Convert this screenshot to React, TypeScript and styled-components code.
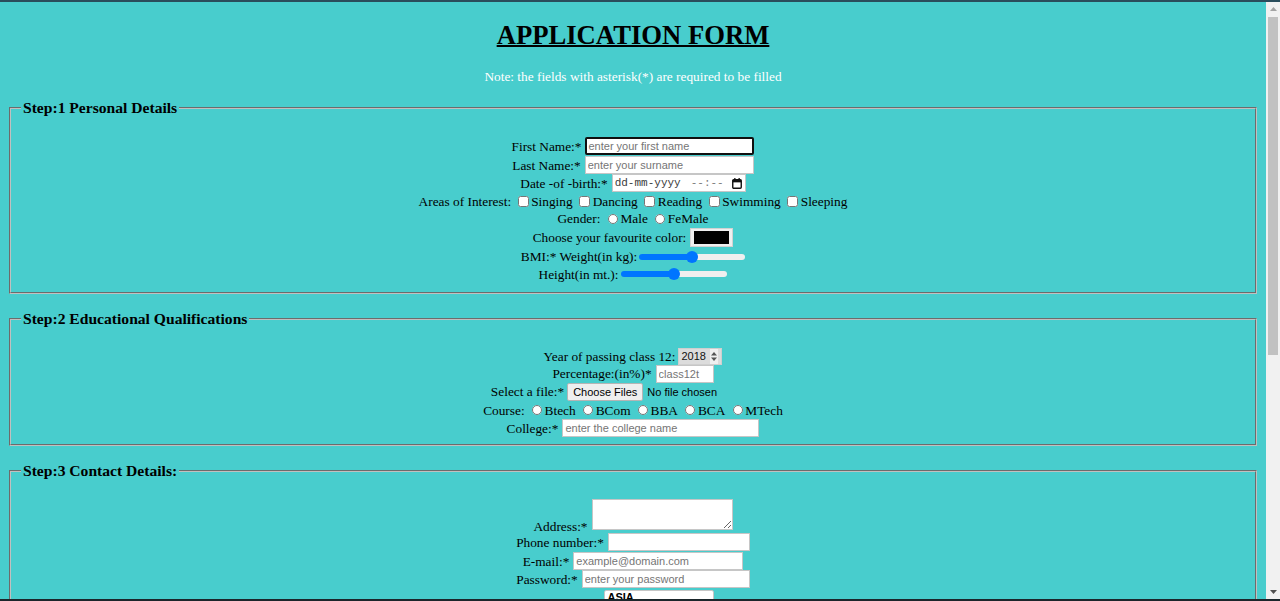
import React from "react";
import styled, { createGlobalStyle, css } from "styled-components";

const GlobalStyle = createGlobalStyle`
  html, body { margin: 0; padding: 0; height: 100%; overflow: hidden; }
  body { background: #48cdcd; font-family: "Liberation Serif", "Times New Roman", serif; }
  #root { height: 100%; }
`;

const Frame = styled.div`
  height: 601px;
  box-sizing: border-box;
  display: flex;
  flex-direction: column;
  border-top: 2px solid #2a4d5c;
  border-bottom: 2px solid #1b262b;
`;

const Viewport = styled.div`
  flex: 1;
  min-height: 0;
  display: flex;
`;

const Page = styled.main`
  flex: 1;
  min-width: 0;
  overflow: hidden;
  padding: 0 7px;
  background: #48cdcd;
  color: #000;
  font-size: 13.33px;
`;

const Scrollbar = styled.div`
  width: 14px;
  flex: none;
  background: #f1f1f1;
  display: flex;
  flex-direction: column;
`;

const ScrollArrow = styled.div`
  height: 14px;
  display: flex;
  align-items: center;
  justify-content: center;
`;

const ScrollThumb = styled.div`
  height: 338px;
  margin: 1px 2px 0;
  background: #c1c1c1;
`;

const ScrollTrack = styled.div`
  flex: 1;
`;

const Title = styled.h1`
  margin: 18px 0 0;
  font-size: 26.67px;
  line-height: 30px;
  font-weight: bold;
  text-align: center;
  text-decoration: underline;
  text-decoration-thickness: 2px;
`;

const Note = styled.p`
  margin: 19px 0 14px;
  color: #fff;
  font-size: 13.33px;
  line-height: 16px;
  text-align: center;
`;

const Section = styled.fieldset<{ $pb: number }>`
  margin: 0 2px;
  padding: 0 10px ${(p) => p.$pb}px;
  border: 2px groove #c0c0c0;
  min-inline-size: min-content;
  & + & {
    margin-top: 16px;
  }
`;

const Legend = styled.legend`
  padding: 0 2px;
  font-size: 15.6px;
  line-height: 18px;
  font-weight: bold;
`;

const Rows = styled.div`
  padding-top: 19px;
  display: flex;
  flex-direction: column;
`;

const Row = styled.div<{ $h: number; $gap?: number; $end?: boolean }>`
  height: ${(p) => p.$h}px;
  display: flex;
  justify-content: center;
  align-items: ${(p) => (p.$end ? "flex-end" : "center")};
  gap: ${(p) => p.$gap ?? 4}px;
  white-space: nowrap;
  line-height: 15px;
`;

const Label = styled.span<{ $mb?: number }>`
  margin-bottom: ${(p) => p.$mb ?? 0}px;
`;

const Options = styled.span`
  display: inline-flex;
  align-items: center;
`;

const TextInput = styled.input<{ $w: number; $focus?: boolean }>`
  box-sizing: border-box;
  width: ${(p) => p.$w}px;
  height: 18px;
  margin: 0;
  padding: 0 2px;
  border: 1px solid #c6c6c6;
  border-radius: 0;
  background: #fff;
  color: #000;
  font: 11px "Liberation Sans", Arial, sans-serif;
  outline: none;
  &::placeholder {
    color: #757575;
  }
  ${(p) =>
    p.$focus &&
    css`
      border: 2px solid #101010;
      border-radius: 2px;
      padding: 0 1px;
    `}
`;

const Check = styled.input.attrs({ type: "checkbox" })`
  width: 11px;
  height: 11px;
  margin: 0 2.5px 0 6.5px;
`;

const Radio = styled.input.attrs({ type: "radio" })`
  width: 10px;
  height: 10px;
  margin: 0 2.5px 0 7.5px;
`;

const Range = styled.input.attrs({ type: "range" })`
  -webkit-appearance: none;
  appearance: none;
  width: 106px;
  height: 13px;
  margin: 0;
  background: transparent;
  &::-webkit-slider-runnable-track {
    height: 6px;
    border-radius: 3px;
    background: linear-gradient(to right, #0075ff 50%, #efefef 50%);
    border: 0;
  }
  &::-webkit-slider-thumb {
    -webkit-appearance: none;
    width: 12px;
    height: 12px;
    border-radius: 50%;
    background: #0075ff;
    margin-top: -3px;
    border: 0;
  }
`;

const ColorInput = styled.input.attrs({ type: "color" })`
  -webkit-appearance: none;
  appearance: none;
  box-sizing: border-box;
  width: 43px;
  height: 19px;
  margin: 0;
  padding: 2px 3px;
  border: 1px solid #d2d2d2;
  background: #efefef;
  &::-webkit-color-swatch-wrapper {
    padding: 0;
  }
  &::-webkit-color-swatch {
    border: 0;
  }
`;

const DateBox = styled.div`
  box-sizing: border-box;
  width: 134px;
  height: 18px;
  display: flex;
  align-items: center;
  padding: 0 2px 0 2px;
  border: 1px solid #c6c6c6;
  background: #fff;
  font: 11px "Liberation Mono", "Courier New", monospace;
`;

const DatePart = styled.span<{ $muted?: boolean }>`
  color: ${(p) => (p.$muted ? "#7a7a7a" : "#3a3a3a")};
  margin-left: ${(p) => (p.$muted ? 10 : 0)}px;
`;

const CalIcon = styled.svg`
  margin-left: auto;
  margin-right: 1px;
`;

const NumberBox = styled.div`
  box-sizing: border-box;
  width: 44px;
  height: 17px;
  display: flex;
  align-items: center;
  justify-content: space-between;
  padding: 0 3px 0 2px;
  border: 1px solid #cfcfcf;
  background: #dcdcdc;
  color: #111;
  font: 11px "Liberation Sans", Arial, sans-serif;
`;

const Spin = styled.span`
  display: flex;
  align-items: center;
  height: 100%;
  padding: 0 1px;
  background: #f0f0f0;
`;

const FileInput = styled.input.attrs({ type: "file", multiple: true })`
  width: 208px;
  margin: 0;
  color: #000;
  font: 11px "Liberation Sans", Arial, sans-serif;
  &::file-selector-button {
    box-sizing: border-box;
    height: 18px;
    margin: 0 4px 0 0;
    padding: 0 5px;
    border: 1px solid #b5b5b5;
    border-radius: 2px;
    background: #efefef;
    color: #000;
    font: inherit;
  }
`;

const Area = styled.textarea`
  box-sizing: border-box;
  width: 141px;
  height: 31px;
  margin: 0 0 2px;
  padding: 1px 2px;
  border: 1px solid #c6c6c6;
  background: #fff;
  font: 11px "Liberation Sans", Arial, sans-serif;
`;

const ListBox = styled.select`
  box-sizing: border-box;
  width: 110px;
  height: 76px;
  margin: 1px 0 0;
  border: 1px solid #c6c6c6;
  background: #fff;
  color: #000;
  font: 11px "Liberation Sans", Arial, sans-serif;
`;

const Arrow = ({ up, color }: { up?: boolean; color: string }) => (
  <svg width="7" height="4" viewBox="0 0 7 4">
    <polygon points={up ? "0,4 7,4 3.5,0" : "0,0 7,0 3.5,4"} fill={color} />
  </svg>
);

export default function App() {
  return (
    <>
      <GlobalStyle />
      <Frame>
        <Viewport>
          <Page>
            <Title>APPLICATION FORM</Title>
            <Note>Note: the fields with asterisk(*) are required to be filled</Note>

            <Section $pb={9}>
              <Legend>Step:1 Personal Details</Legend>
              <Rows>
                <Row $h={20}>
                  <Label>First Name:*</Label>
                  <TextInput $w={169} $focus placeholder="enter your first name" />
                </Row>
                <Row $h={18}>
                  <Label>Last Name:*</Label>
                  <TextInput $w={169} placeholder="enter your surname" />
                </Row>
                <Row $h={18}>
                  <Label>Date -of -birth:*</Label>
                  <DateBox>
                    <DatePart>dd-mm-yyyy</DatePart>
                    <DatePart $muted>--:--</DatePart>
                    <CalIcon width="10" height="11" viewBox="0 0 10 11">
                      <rect x="0.75" y="1.75" width="8.5" height="8.5" rx="1" fill="none" stroke="#111" strokeWidth="1.4" />
                      <rect x="0.75" y="1.75" width="8.5" height="2.6" fill="#111" />
                      <rect x="2.2" y="0" width="1.3" height="2" fill="#111" />
                      <rect x="6.5" y="0" width="1.3" height="2" fill="#111" />
                    </CalIcon>
                  </DateBox>
                </Row>
                <Row $h={18} $gap={0}>
                  <Label>Areas of Interest:</Label>
                  {["Singing", "Dancing", "Reading", "Swimming", "Sleeping"].map((t) => (
                    <Options key={t}>
                      <Check />
                      {t}
                    </Options>
                  ))}
                </Row>
                <Row $h={17} $gap={0}>
                  <Label>Gender:</Label>
                  {["Male", "FeMale"].map((t) => (
                    <Options key={t}>
                      <Radio name="gender" />
                      {t}
                    </Options>
                  ))}
                </Row>
                <Row $h={21}>
                  <Label>Choose your favourite color:</Label>
                  <ColorInput defaultValue="#000000" />
                </Row>
                <Row $h={17} $gap={2}>
                  <Label>BMI:* Weight(in kg):</Label>
                  <Range defaultValue={50} />
                </Row>
                <Row $h={18} $gap={3}>
                  <Label>Height(in mt.):</Label>
                  <Range defaultValue={50} />
                </Row>
              </Rows>
            </Section>

            <Section $pb={7}>
              <Legend>Step:2 Educational Qualifications</Legend>
              <Rows>
                <Row $h={18} $gap={3}>
                  <Label>Year of passing class 12:</Label>
                  <NumberBox>
                    <span>2018</span>
                    <Spin>
                      <svg width="6" height="9" viewBox="0 0 6 9">
                        <polygon points="0,3.5 6,3.5 3,0" fill="#555" />
                        <polygon points="0,5.5 6,5.5 3,9" fill="#555" />
                      </svg>
                    </Spin>
                  </NumberBox>
                </Row>
                <Row $h={17}>
                  <Label>Percentage:(in%)*</Label>
                  <TextInput $w={58} placeholder="class12t" />
                </Row>
                <Row $h={19} $gap={3}>
                  <Label>Select a file:*</Label>
                  <FileInput />
                </Row>
                <Row $h={18} $gap={0}>
                  <Label>Course: </Label>
                  {["Btech", "BCom", "BBA", "BCA", "MTech"].map((t) => (
                    <Options key={t}>
                      <Radio name="course" />
                      {t}
                    </Options>
                  ))}
                </Row>
                <Row $h={18}>
                  <Label>College:*</Label>
                  <TextInput $w={197} placeholder="enter the college name" />
                </Row>
              </Rows>
            </Section>

            <Section $pb={9}>
              <Legend>Step:3 Contact Details:</Legend>
              <Rows>
                <Row $h={33} $end>
                  <Label $mb={-2}>Address:*</Label>
                  <Area />
                </Row>
                <Row $h={20}>
                  <Label>Phone number:*</Label>
                  <TextInput $w={142} />
                </Row>
                <Row $h={18}>
                  <Label>E-mail:*</Label>
                  <TextInput $w={170} placeholder="example@domain.com" />
                </Row>
                <Row $h={18}>
                  <Label>Password:*</Label>
                  <TextInput $w={168} type="password" placeholder="enter your password" />
                </Row>
                <Row $h={78} $end>
                  <Label $mb={2}>Region:*</Label>
                  <ListBox size={5} multiple>
                    <optgroup label="ASIA">
                      <option>India</option>
                      <option>China</option>
                      <option>Japan</option>
                    </optgroup>
                    <optgroup label="EUROPE">
                      <option>France</option>
                      <option>Germany</option>
                      <option>Italy</option>
                    </optgroup>
                  </ListBox>
                </Row>
              </Rows>
            </Section>
          </Page>
          <Scrollbar>
            <ScrollArrow>
              <Arrow up color="#a3a3a3" />
            </ScrollArrow>
            <ScrollThumb />
            <ScrollTrack />
            <ScrollArrow>
              <Arrow color="#505050" />
            </ScrollArrow>
          </Scrollbar>
        </Viewport>
      </Frame>
    </>
  );
}
